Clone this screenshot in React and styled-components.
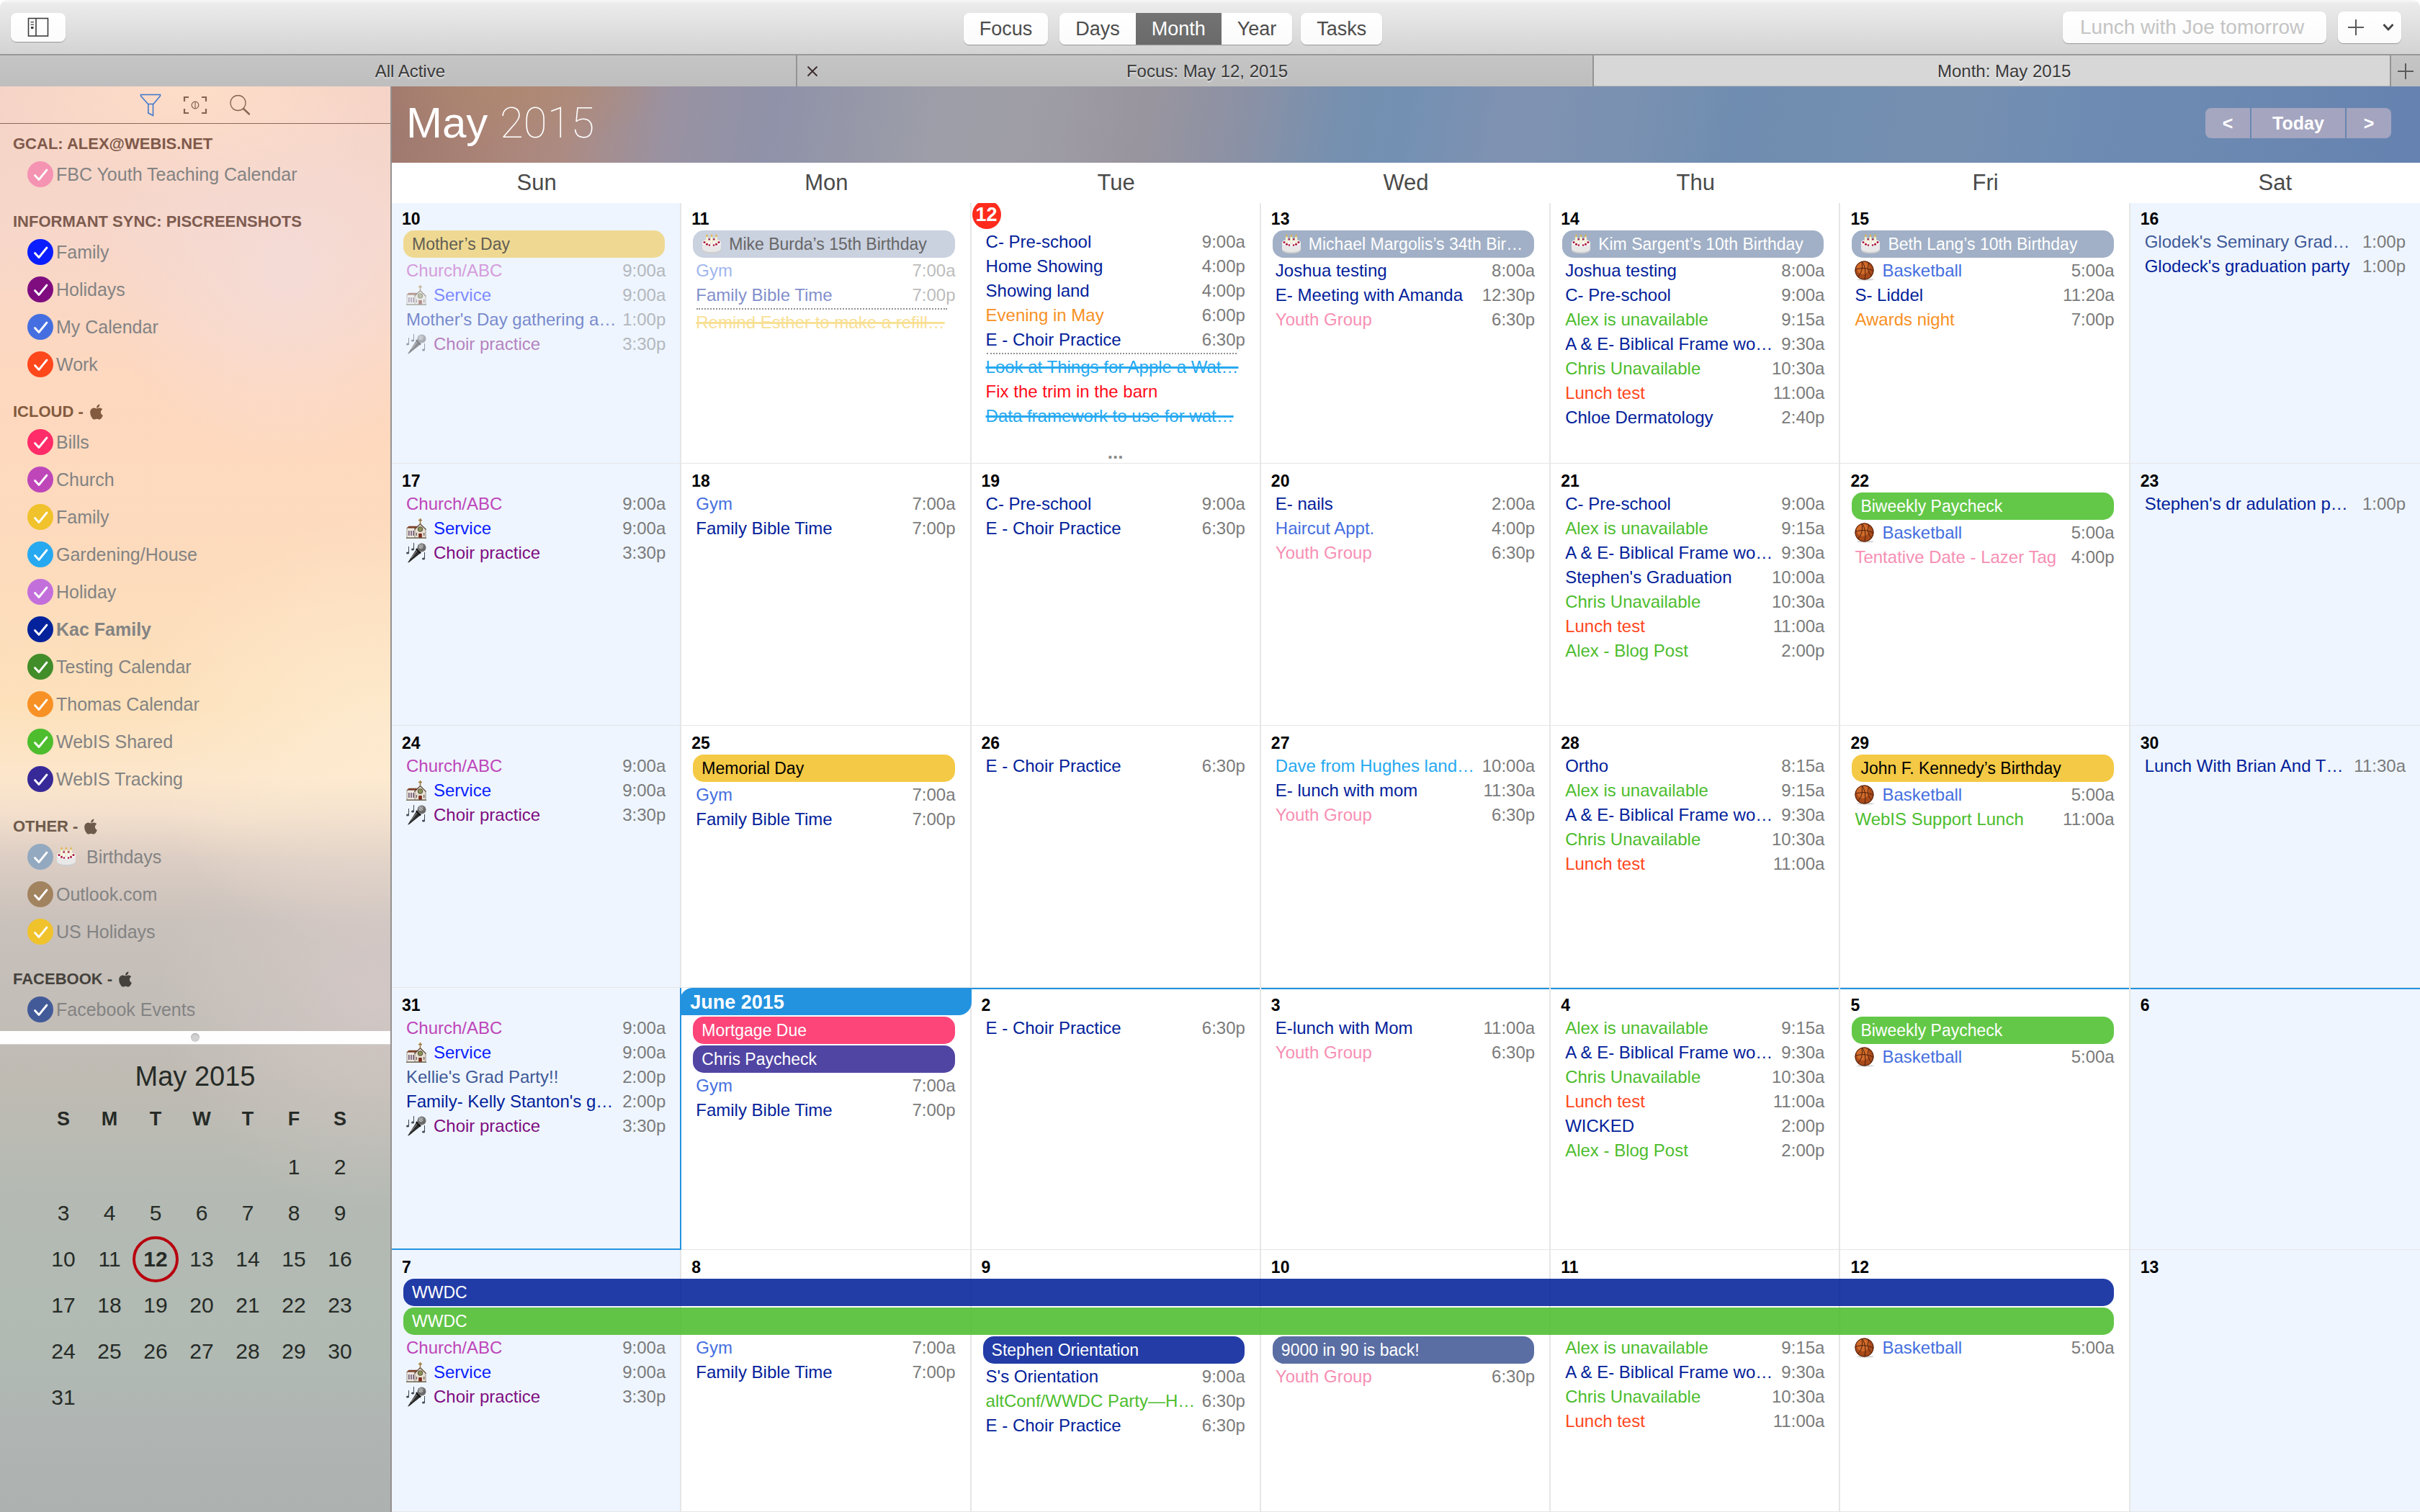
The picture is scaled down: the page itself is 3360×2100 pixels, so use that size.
import React, { useState } from "react";
import styled, { createGlobalStyle, css } from "styled-components";
import { FaApple } from "react-icons/fa";

const sans = `"Liberation Sans", Arial, Helvetica, sans-serif`;

const c = {
  navy: "#02219a",
  blue: "#0a1eff",
  royal: "#456fe0",
  church: "#be46b9",
  purple: "#7f0d80",
  orange: "#f79125",
  green: "#4dbd2e",
  pink: "#f78fb3",
  tomato: "#ff471c",
  sky: "#26a9f0",
  red: "#ff0d1a",
  gold: "#f2c22c",
  slate: "#3f5997",
  accent: "#2393e0",
  line: "#e6e6e6",
  weekend: "#eef5ff",
};

const GlobalStyle = createGlobalStyle`
  *, *::before, *::after { box-sizing: border-box; }
  body { margin: 0; background: #fff; font-family: ${sans}; }
  button, input { font-family: inherit; }
  ul { list-style: none; margin: 0; padding: 0; }
`;

const Window = styled.div`
  display: flex;
  flex-direction: column;
  min-height: 100vh;
  overflow: hidden;
`;

/* ---------- toolbar ---------- */

const Toolbar = styled.header`
  display: grid;
  grid-template-columns: 1fr auto 1fr;
  align-items: center;
  height: 77px;
  padding: 0 26px 0 15px;
  border-bottom: 2px solid #989898;
  border-radius: 10px 10px 0 0;
  background: linear-gradient(#f8f8f8, #ebebeb 5px, #d3d3d3);
`;

const raised = css`
  border: 0;
  border-radius: 8px;
  background: linear-gradient(#fff, #fbfbfb);
  box-shadow: 0 1px 1px rgba(0, 0, 0, 0.3);
`;

const ToggleButton = styled.button`
  ${raised}
  display: flex;
  align-items: center;
  justify-content: center;
  width: 76px;
  height: 40px;
  padding: 0;
`;

const ViewSwitch = styled.nav`
  display: flex;
  margin-top: 5px;
  padding-right: 92px;
`;

const Segments = styled.div`
  ${raised}
  display: flex;
  margin: 0 12px 0 16px;
`;

const ViewButton = styled.button`
  ${(p) => (p.$plain ? "border: 0; background: none;" : raised)}
  height: 44px;
  padding: 0 22px;
  font-size: 27px;
  line-height: 44px;
  color: #4d4d4d;
  ${(p) =>
    p.$on &&
    css`
      background: linear-gradient(#737373, #6a6a6a);
      color: #fff;
    `}
`;

const QuickAdd = styled.div`
  display: flex;
  justify-content: flex-end;
  gap: 16px;
`;

const QuickInput = styled.input`
  ${raised}
  width: 366px;
  height: 44px;
  padding: 0 24px;
  font-size: 28px;
  &::placeholder {
    color: #c4c4c4;
    opacity: 1;
  }
`;

const AddButton = styled.button`
  ${raised}
  display: flex;
  align-items: center;
  justify-content: space-between;
  width: 88px;
  height: 44px;
  padding: 0 10px 0 13px;
`;

/* ---------- tabs ---------- */

const TabBar = styled.nav`
  display: flex;
  height: 43px;
  background: linear-gradient(#c5c5c5, #bebebe);
`;

const Tab = styled.div`
  display: flex;
  flex: 1;
  align-items: center;
  border-right: 2px solid #949494;
  background: ${(p) => (p.$active ? "#d7d7d7" : "none")};
  box-shadow: ${(p) => (p.$active ? "inset 0 -1px #b9b9b9" : "none")};
`;

const TabClose = styled.button`
  display: flex;
  align-items: center;
  justify-content: center;
  width: 34px;
  height: 42px;
  padding: 0 0 0 8px;
  border: 0;
  background: none;
`;

const TabLabel = styled.button`
  flex: 1;
  padding: 0;
  border: 0;
  background: none;
  font-size: 24px;
  line-height: 42px;
  color: #3a3a3a;
  text-shadow: 0 2px 2px rgba(255, 255, 255, 0.6);
`;

const NewTab = styled.button`
  display: flex;
  align-items: center;
  justify-content: center;
  width: 40px;
  padding: 0;
  border: 0;
  background: none;
`;

/* ---------- sidebar ---------- */

const Body = styled.div`
  display: flex;
  flex: 1;
`;

const Sidebar = styled.aside`
  display: flex;
  flex-direction: column;
  flex: none;
  width: 544px;
  border-right: 2px solid #959190;
  background:
    radial-gradient(ellipse 300px 160px at 270px 0, rgba(255, 222, 200, 0.9), transparent),
    radial-gradient(ellipse 260px 260px at 400px 260px, rgba(243, 220, 218, 0.8), transparent),
    radial-gradient(ellipse 300px 300px at 520px 1260px, rgba(216, 203, 202, 0.7), transparent),
    radial-gradient(ellipse 320px 300px at 520px 900px, rgba(253, 236, 210, 0.8), transparent),
    linear-gradient(
      #f4d3c7 0, #f7d7ca 200px, #fed8bf 400px, #fddabd 620px, #fde1bb 860px,
      #fce6cb 960px, #f3dfcc 1010px, #ddcec4 1070px, #c9c1bb 1160px, #c2bdb7 1300px,
      #bfbbb3 1380px, #b4bab3 1540px, #b0bab3 1760px, #b0b5b3 1860px, #adb1b0 1980px
    );
`;

const SidebarTools = styled.div`
  display: flex;
  align-items: center;
  justify-content: center;
  gap: 26px;
  height: 52px;
  border-bottom: 1px solid #8c6857;
`;

const ToolButton = styled.button`
  display: flex;
  align-items: center;
  justify-content: center;
  width: 36px;
  height: 36px;
  padding: 0;
  border: 0;
  background: none;
`;

const Groups = styled.div`
  display: flex;
  flex-direction: column;
  gap: 24px;
  padding: 12px 18px 4px;
`;

const GroupTitle = styled.h2`
  display: flex;
  align-items: center;
  gap: 6px;
  margin: 0;
  font-size: 22px;
  line-height: 32px;
  color: ${(p) => p.$color};
`;

const CalendarRow = styled.label`
  display: flex;
  align-items: center;
  gap: 4px;
  height: 52px;
  padding-left: 20px;
  font-size: 25px;
  font-weight: ${(p) => (p.$bold ? 700 : 400)};
  color: #838383;
`;

const Tick = styled.span`
  display: grid;
  width: 36px;
  height: 36px;
  & > * {
    grid-area: 1 / 1;
  }
`;

const TickBox = styled.input`
  appearance: none;
  width: 36px;
  height: 36px;
  margin: 0;
  border-radius: 50%;
  background: ${(p) => p.$color};
`;

const Splitter = styled.div`
  display: flex;
  align-items: center;
  justify-content: center;
  height: 19px;
  border-bottom: 1px solid #d5d3d0;
  background: #fefefe;
  &::after {
    content: "";
    width: 12px;
    height: 12px;
    border-radius: 50%;
    background: #d0d0d0;
    box-shadow: inset 0 1px 1px #a4a4a4;
  }
`;

const MiniMonth = styled.section`
  display: flex;
  flex-direction: column;
  align-items: center;
  padding-top: 20px;
  padding-left: 18px;
  color: #262b27;
`;

const MiniTitle = styled.h2`
  margin: 0 18px 0 0;
  font-size: 38px;
  font-weight: 400;
  line-height: 48px;
`;

const MiniTable = styled.table`
  border-collapse: collapse;
  table-layout: fixed;
  width: 448px;
  font-size: 30px;
  text-align: center;
  th {
    height: 70px;
    padding: 0;
    font-size: 27px;
  }
  td {
    height: 64px;
    padding: 0;
  }
`;

const MiniDay = styled.button`
  width: 64px;
  height: 64px;
  padding: 0;
  border: ${(p) => (p.$today ? "4px solid #b8040f" : "0")};
  border-radius: 50%;
  background: none;
  font-size: 30px;
  font-weight: ${(p) => (p.$today ? 700 : 400)};
  color: inherit;
  vertical-align: middle;
`;

/* ---------- month view ---------- */

const Month = styled.main`
  display: flex;
  flex: 1;
  flex-direction: column;
  min-width: 0;
`;

const MonthBar = styled.div`
  display: flex;
  align-items: center;
  justify-content: space-between;
  height: 106px;
  padding: 0 40px 4px 20px;
  background:
    radial-gradient(ellipse 220px 90px at 160px 0, rgba(178, 138, 108, 0.6), transparent),
    linear-gradient(
      100deg,
      #9e786e 0, #aa8377 5%, #ac8b83 9%, #9992a2 14%, #8f92a9 19%, #9d9ea8 27%,
      #9f9ea7 31%, #99959e 37%, #8b91a5 42%, #7590b0 47%, #7390b3 50%, #8092b2 55%,
      #7a91b1 61%, #6f8db0 66%, #758fb0 77%, #6e8cb3 83%, #6b89b1 90%, #6582b0 100%
    );
`;

const MonthTitle = styled.h1`
  margin: 0;
  font-size: 60px;
  font-weight: 400;
  line-height: 72px;
  color: #fff;
`;

const ThinYear = styled.span`
  font-family: Roboto, ${sans};
  font-weight: 100;
`;

const Pager = styled.div`
  display: flex;
  gap: 2px;
  overflow: hidden;
  border-radius: 8px;
`;

const PagerButton = styled.button`
  width: ${(p) => (p.$wide ? 130 : 62)}px;
  height: 42px;
  padding: 0;
  border: 0;
  background: rgba(196, 182, 200, 0.65);
  font-size: 25px;
  font-weight: 700;
  line-height: 42px;
  color: #fff;
`;

const Weekdays = styled.div`
  display: grid;
  grid-template-columns: repeat(7, 1fr);
  z-index: 1;
  height: 56px;
  margin-bottom: -2px;
  background: #fff;
  font-size: 31px;
  line-height: 56px;
  text-align: center;
  color: #4a4a4a;
`;

const Week = styled.div`
  display: grid;
  grid-template-columns: repeat(7, minmax(0, 1fr));
  flex: 1 0 0;
`;

const Day = styled.section`
  grid-row: 1;
  grid-column: ${(p) => p.$col};
  display: flex;
  flex-direction: column;
  border-right: 2px solid ${c.line};
  border-bottom: 1px solid ${c.line};
  background: ${(p) => (p.$weekend ? c.weekend : "#fff")};
  ${(p) => p.$col === 7 && "border-right: 0;"}
  ${(p) => p.$topEdge && `box-shadow: inset 0 2px ${c.accent};`}
  ${(p) =>
    p.$lastOfMonth &&
    css`
      border-right-color: ${c.accent};
      border-bottom: 2px solid ${c.accent};
    `}
`;

const DayNumber = styled.h3`
  height: 38px;
  margin: 0;
  padding: 9px 14px 0;
  font-size: 23px;
  line-height: 30px;
  color: #000;
`;

const TodayBadge = styled.h3`
  width: 40px;
  height: 40px;
  margin: -2px 0 0 1px;
  border-radius: 50%;
  background: #ff2b1c;
  font-size: 27px;
  line-height: 40px;
  text-align: center;
  color: #fff;
`;

const MonthBadge = styled.h3`
  z-index: 1;
  height: 38px;
  margin: 0 -2px;
  padding-left: 14px;
  border-radius: 18px 0;
  background: ${c.accent};
  font-size: 27px;
  line-height: 40px;
  color: #fff;
`;

const Chip = styled.div`
  display: flex;
  align-items: center;
  height: 38px;
  margin: ${(p) => (p.$span ? "2px 0 0" : "2px 21px 0 16px")};
  padding: 0 12px;
  overflow: hidden;
  border-radius: 15px;
  background: ${(p) => p.$bg};
  font-size: 23px;
  line-height: 38px;
  white-space: nowrap;
  color: ${(p) => p.$fg};
`;

const Spans = styled.div`
  grid-row: 1;
  grid-column: 1 / 7;
  z-index: 1;
  align-self: start;
  margin: 38px 23px 0 16px;
`;

const SpanRoom = styled.div`
  height: 80px;
`;

const EventList = styled.ul`
  padding: 1px 20px 0 20px;
  font-size: 24px;
  line-height: 34px;
  white-space: nowrap;
`;

const EventItem = styled.li`
  display: flex;
  justify-content: space-between;
  height: 34px;
  opacity: ${(p) => (p.$faded ? 0.5 : 1)};
`;

const EventTitle = styled.span`
  display: flex;
  align-items: center;
  color: ${(p) => p.$color};
  text-decoration: ${(p) => (p.$done ? "line-through 3px" : "none")};
`;

const EventTime = styled.time`
  color: #7b7b7b;
`;

const TaskRule = styled.li`
  height: 2px;
  margin: 1px 12px 1px 1px;
  border-bottom: 2px dotted #909090;
`;

const MoreButton = styled.button`
  align-self: center;
  height: 30px;
  margin-top: auto;
  padding: 0;
  border: 0;
  background: none;
  font-size: 26px;
  font-weight: 700;
  line-height: 28px;
  color: #8c8c8c;
`;

const Glyph = styled.svg`
  flex: none;
  width: 28px;
  height: 28px;
  margin-right: 10px;
`;

/* ---------- drawings ---------- */

const Cake = () => (
  <Glyph viewBox="0 0 28 28" aria-hidden="true">
    <path d="M1 12v10c0 3 6 5 13 5s13-2 13-5V12z" fill="#cfcece" />
    <path d="M1 13v7c0 3 6 5 13 5s13-2 13-5v-7z" fill="#e9e8e8" />
    <ellipse cx="14" cy="12" rx="13" ry="5" fill="#fbfafa" />
    <g fill="#a8123c">
      <circle cx="4" cy="11.500" r="1.500" /><circle cx="7.500" cy="14.200" r="1.500" />
      <circle cx="11" cy="15.500" r="1.300" /><circle cx="17" cy="15.500" r="1.300" />
      <circle cx="20.500" cy="14.200" r="1.500" /><circle cx="24" cy="11.500" r="1.500" />
      <circle cx="10.700" cy="7.500" r="1.300" /><circle cx="17.300" cy="7.500" r="1.300" />
    </g>
    <g fill="#fbf8df" stroke="#cfc7a4" strokeWidth=".5">
      <rect x="6" y="4" width="3" height="8.500" /><rect x="12.500" y="4" width="3" height="9.500" />
      <rect x="19" y="4" width="3" height="8.500" />
    </g>
    <g fill="#e4b43c">
      <path d="M7.500 0l1.300 2.500-1.300 1.700-1.300-1.700z" />
      <path d="M14 0l1.300 2.500-1.300 1.700-1.300-1.700z" />
      <path d="M20.500 0l1.300 2.500-1.300 1.700-1.300-1.700z" />
    </g>
  </Glyph>
);

const Church = () => (
  <Glyph viewBox="0 0 28 28" aria-hidden="true">
    <path d="M1 13h13v14H1z" fill="#eee9e2" stroke="#7c7265" strokeWidth=".7" />
    <path d="M.5 13.500l3-2.700h12v2.700z" fill="#7d4026" />
    <path d="M12 27V15l7.500-7L27 15v12z" fill="#e6dfd2" stroke="#766c5e" strokeWidth=".7" />
    <path d="M11.300 15.500L19.500 7.500l8 8" fill="none" stroke="#5d4433" strokeWidth="1.200" />
    <path d="M19.500 0v7.500M17 2.500h5" stroke="#9c7434" strokeWidth="1.500" />
    <circle cx="19.500" cy="15" r="3.300" fill="#8d9258" stroke="#4d4a30" strokeWidth="1" />
    <path d="M17.200 27v-6h4.600v6z" fill="#7a2a1c" />
    <path d="M3 17h1.600v7H3zM6.200 17h1.600v7H6.200zM9.400 17H11v7H9.400z" fill="#6d5570" />
    <path d="M13.700 20h1.300v4h-1.300zM24 20h1.300v4H24z" fill="#6f5d58" />
    <path d="M0 26.500h28V28H0z" fill="#77705f" />
  </Glyph>
);

const Mic = () => (
  <Glyph viewBox="0 0 28 28" aria-hidden="true">
    <path d="M2 27.500L14 9l5.500 5.500L4 27z" fill="#2c2c2c" />
    <path d="M7 21l8-10" stroke="#8e8e8e" strokeWidth="1.200" />
    <path d="M14 8l6 6.500" stroke="#111" strokeWidth="2.500" />
    <circle cx="21.500" cy="6.500" r="6" fill="#6e6e6e" />
    <circle cx="20.500" cy="5" r="3.200" fill="#b4b4b4" />
    <path d="M17.500 3l8 8M19.500 1.500l7 7M16 6l6 6" stroke="#505050" strokeWidth=".6" />
    <g fill="none" stroke="#3f4750" strokeWidth="1">
      <path d="M3.500 5v9M10.500 0v9M25.500 13v9" />
    </g>
    <g fill="#3f4750">
      <ellipse cx="2" cy="14" rx="2" ry="1.500" /><ellipse cx="9" cy="9" rx="2" ry="1.500" />
      <ellipse cx="24" cy="22" rx="2" ry="1.500" />
    </g>
  </Glyph>
);

const Basketball = () => (
  <Glyph viewBox="0 0 28 28" aria-hidden="true">
    <ellipse cx="15" cy="26.300" rx="12" ry="1.500" fill="#d4d4d4" />
    <circle cx="13.500" cy="13.500" r="13" fill="#a94a1a" />
    <circle cx="11.500" cy="10" r="9" fill="#d06a2a" />
    <g fill="none" stroke="#4a1e0a" strokeWidth="1">
      <circle cx="13.500" cy="13.500" r="12.600" />
      <path d="M10.500 1.200c4 6 5.500 16 3.500 24.800M1 12.500c8-3 18-2.500 25 2M4.500 22.500c5-5 7-11.500 5.500-21M23.500 21c-5-4-6.500-12-3.500-18" />
    </g>
  </Glyph>
);

const glyphs = { cake: <Cake />, church: <Church />, mic: <Mic />, ball: <Basketball /> };

const CheckMark = () => (
  <svg width="36" height="36" viewBox="0 0 36 36" pointerEvents="none" aria-hidden="true">
    <path d="M10.500 19.500l5.500 6L27 12" fill="none" stroke="#fff" strokeWidth="2.800" strokeLinecap="round" strokeLinejoin="round" />
  </svg>
);

const PanelIcon = () => (
  <svg width="30" height="28" viewBox="0 0 30 28" aria-hidden="true">
    <g fill="none" stroke="#3d3d3d" strokeWidth="1.600">
      <rect x="1.500" y="1.500" width="27" height="24.500" /><path d="M12 1.500V26" />
    </g>
    <path d="M4.500 6h4.500v1.300H4.500zM4.500 9.500h4.500v1.300H4.500zM5 13h3.500v3H5z" fill="#3d3d3d" />
  </svg>
);

const Funnel = () => (
  <svg width="30" height="32" viewBox="0 0 30 32" fill="none" stroke="#3a76cc" strokeWidth="1.500" aria-hidden="true">
    <path d="M1.500 1.500h27v1.800L19 14.500h-7.500L1.500 3.300zM11.800 14.500v12.500l6.700 3.500v-16" />
  </svg>
);

const Viewfinder = () => (
  <svg width="34" height="26" viewBox="0 0 34 26" fill="none" stroke="#866353" aria-hidden="true">
    <path d="M2 8V2h6M26 2h6v6M32 18v6h-6M8 24H2v-6" strokeWidth="2.200" />
    <circle cx="17" cy="13" r="4.800" strokeWidth="1.300" /><path d="M17 8v10" strokeWidth="1.200" />
  </svg>
);

const Magnifier = () => (
  <svg width="30" height="30" viewBox="0 0 30 30" fill="none" stroke="#8a6553" strokeLinecap="round" aria-hidden="true">
    <circle cx="12.500" cy="12" r="10.500" strokeWidth="1.300" /><path d="M20 20l8 7.500" strokeWidth="2.400" />
  </svg>
);

const Plus = () => (
  <svg width="24" height="24" viewBox="0 0 24 24" stroke="#5a5a5a" strokeWidth="2" aria-hidden="true">
    <path d="M12 1v22M1 12h22" />
  </svg>
);

const Caret = () => (
  <svg width="16" height="12" viewBox="0 0 16 12" fill="none" stroke="#444" strokeWidth="2.800" aria-hidden="true">
    <path d="M1.500 2L8 9l6.500-7" />
  </svg>
);

const Cross = () => (
  <svg width="16" height="16" viewBox="0 0 16 16" stroke="#3a2a2a" strokeWidth="1.800" aria-hidden="true">
    <path d="M1.500 1.500l13 13M14.500 1.500l-13 13" />
  </svg>
);

/* ---------- data ---------- */

const groups = [
  { title: "GCAL: ALEX@WEBIS.NET", color: "#80594a", items: [["FBC Youth Teaching Calendar", "#f593b3"]] },
  {
    title: "INFORMANT SYNC: PISCREENSHOTS",
    color: "#7d5b4f",
    items: [["Family", "#0b1eff"], ["Holidays", "#7f0d80"], ["My Calendar", "#456fe0"], ["Work", "#ff471c"]],
  },
  {
    title: "ICLOUD -",
    apple: true,
    color: "#835b3f",
    items: [
      ["Bills", "#ff2c69"], ["Church", "#be46b9"], ["Family", "#f0c22c"], ["Gardening/House", "#26a9f0"],
      ["Holiday", "#c36fdb"], ["Kac Family", "#04229b", "bold"], ["Testing Calendar", "#418d2a"],
      ["Thomas Calendar", "#f79125"], ["WebIS Shared", "#4dbd2e"], ["WebIS Tracking", "#382998"],
    ],
  },
  {
    title: "OTHER -",
    apple: true,
    color: "#6e5a4a",
    items: [["Birthdays", "#93a9bf", "cake"], ["Outlook.com", "#a28360"], ["US Holidays", "#f0c22c"]],
  },
  { title: "FACEBOOK -", apple: true, color: "#45423d", items: [["Facebook Events", "#425a98"]] },
];

const e = (title, time, color, icon) => ({ title, time, color, icon });
const chip = (title, bg, fg = "#fff", icon) => ({ title, bg, fg, icon });

const churchAbc = e("Church/ABC", "9:00a", c.church);
const service = e("Service", "9:00a", c.blue, "church");
const choir = e("Choir practice", "3:30p", c.purple, "mic");
const gym = e("Gym", "7:00a", c.royal);
const bible = e("Family Bible Time", "7:00p", c.navy);
const preschool = e("C- Pre-school", "9:00a", c.navy);
const choirPractice = e("E - Choir Practice", "6:30p", c.navy);
const youth = e("Youth Group", "6:30p", c.pink);
const alex = e("Alex is unavailable", "9:15a", c.green);
const frame = e("A & E- Biblical Frame wo…", "9:30a", c.navy);
const chris = e("Chris Unavailable", "10:30a", c.green);
const lunch = e("Lunch test", "11:00a", c.tomato);
const blog = e("Alex - Blog Post", "2:00p", c.green);
const ball = e("Basketball", "5:00a", c.royal, "ball");
const paycheck = chip("Biweekly Paycheck", "#63c847");

const weeks = [
  {
    days: [
      {
        n: 10, faded: true, chips: [chip("Mother’s Day", "#efd992", "#625e54")],
        events: [churchAbc, service, e("Mother's Day gathering a…", "1:00p", c.navy), choir],
      },
      {
        n: 11, faded: true, chips: [chip("Mike Burda’s 15th Birthday", "#cad1df", "#666", "cake")],
        events: [gym, bible], tasks: [{ title: "Remind Esther to make a refill…", color: c.gold, done: true }],
      },
      {
        n: 12, today: true, more: true,
        events: [
          preschool, e("Home Showing", "4:00p", c.navy), e("Showing land", "4:00p", c.navy),
          e("Evening in May", "6:00p", c.orange), choirPractice,
        ],
        tasks: [
          { title: "Look at Things for Apple a Wat…", color: c.sky, done: true },
          { title: "Fix the trim in the barn", color: c.red },
          { title: "Data framework to use for wat…", color: c.sky, done: true },
        ],
      },
      {
        n: 13, chips: [chip("Michael Margolis’s 34th Bir…", "#a1b0c6", "#fff", "cake")],
        events: [e("Joshua testing", "8:00a", c.navy), e("E- Meeting with Amanda", "12:30p", c.navy), youth],
      },
      {
        n: 14, chips: [chip("Kim Sargent’s 10th Birthday", "#a1b0c6", "#fff", "cake")],
        events: [
          e("Joshua testing", "8:00a", c.navy), preschool, alex, frame, chris, lunch,
          e("Chloe Dermatology", "2:40p", c.navy),
        ],
      },
      {
        n: 15, chips: [chip("Beth Lang’s 10th Birthday", "#a1b0c6", "#fff", "cake")],
        events: [ball, e("S- Liddel", "11:20a", c.navy), e("Awards night", "7:00p", c.orange)],
      },
      {
        n: 16,
        events: [e("Glodek's Seminary Grad…", "1:00p", c.slate), e("Glodeck's graduation party", "1:00p", c.navy)],
      },
    ],
  },
  {
    days: [
      { n: 17, events: [churchAbc, service, choir] },
      { n: 18, events: [gym, bible] },
      { n: 19, events: [preschool, choirPractice] },
      { n: 20, events: [e("E- nails", "2:00a", c.navy), e("Haircut Appt.", "4:00p", c.royal), youth] },
      {
        n: 21,
        events: [preschool, alex, frame, e("Stephen's Graduation", "10:00a", c.navy), chris, lunch, blog],
      },
      { n: 22, chips: [paycheck], events: [ball, e("Tentative Date - Lazer Tag", "4:00p", c.pink)] },
      { n: 23, events: [e("Stephen's dr adulation p…", "1:00p", c.navy)] },
    ],
  },
  {
    days: [
      { n: 24, events: [churchAbc, service, choir] },
      { n: 25, chips: [chip("Memorial Day", "#f4c945", "#000")], events: [gym, bible] },
      { n: 26, events: [choirPractice] },
      {
        n: 27,
        events: [e("Dave from Hughes land…", "10:00a", c.sky), e("E- lunch with mom", "11:30a", c.navy), youth],
      },
      { n: 28, events: [e("Ortho", "8:15a", c.navy), alex, frame, chris, lunch] },
      {
        n: 29, chips: [chip("John F. Kennedy’s Birthday", "#f4c945", "#000")],
        events: [ball, e("WebIS Support Lunch", "11:00a", c.green)],
      },
      { n: 30, events: [e("Lunch With Brian And T…", "11:30a", c.navy)] },
    ],
  },
  {
    days: [
      {
        n: 31, lastOfMonth: true,
        events: [
          churchAbc, service, e("Kellie's Grad Party!!", "2:00p", c.slate),
          e("Family- Kelly Stanton's g…", "2:00p", c.navy), choir,
        ],
      },
      {
        n: 1, month: "June 2015", chips: [chip("Mortgage Due", "#fd4579"), chip("Chris Paycheck", "#5145a3")],
        events: [gym, bible],
      },
      { n: 2, topEdge: true, events: [choirPractice] },
      { n: 3, topEdge: true, events: [e("E-lunch with Mom", "11:00a", c.navy), youth] },
      { n: 4, topEdge: true, events: [alex, frame, chris, lunch, e("WICKED", "2:00p", c.navy), blog] },
      { n: 5, topEdge: true, chips: [paycheck], events: [ball] },
      { n: 6, topEdge: true, events: [] },
    ],
  },
  {
    spans: [chip("WWDC", "rgba(4, 34, 155, 0.88)"), chip("WWDC", "rgba(77, 189, 46, 0.88)")],
    days: [
      { n: 7, room: true, events: [churchAbc, service, choir] },
      { n: 8, room: true, events: [gym, bible] },
      {
        n: 9, room: true, chips: [chip("Stephen Orientation", "#233ca6")],
        events: [e("S's Orientation", "9:00a", c.navy), e("altConf/WWDC Party—H…", "6:30p", c.green), choirPractice],
      },
      { n: 10, room: true, chips: [chip("9000 in 90 is back!", "#5a6ea3")], events: [youth] },
      { n: 11, room: true, events: [alex, frame, chris, lunch] },
      { n: 12, room: true, events: [ball] },
      { n: 13, events: [] },
    ],
  },
];

const miniRows = [0, 1, 2, 3, 4, 5].map((row) => [0, 1, 2, 3, 4, 5, 6].map((col) => row * 7 + col - 4));

/* ---------- parts ---------- */

function DayCell({ day, col }) {
  const { chips = [], events, tasks } = day;
  return (
    <Day
      $col={col + 1}
      $weekend={col === 0 || col === 6}
      $topEdge={day.topEdge}
      $lastOfMonth={day.lastOfMonth}
    >
      {day.month ? (
        <MonthBadge>{day.month}</MonthBadge>
      ) : day.today ? (
        <TodayBadge>{day.n}</TodayBadge>
      ) : (
        <DayNumber>{day.n}</DayNumber>
      )}
      {day.room && <SpanRoom />}
      {chips.map((item) => (
        <Chip key={item.title} $bg={item.bg} $fg={item.fg}>
          {glyphs[item.icon]}
          {item.title}
        </Chip>
      ))}
      <EventList>
        {events.map((item) => (
          <EventItem key={item.title} $faded={day.faded}>
            <EventTitle $color={item.color}>
              {glyphs[item.icon]}
              {item.title}
            </EventTitle>
            <EventTime>{item.time}</EventTime>
          </EventItem>
        ))}
        {tasks && <TaskRule />}
        {tasks?.map((item) => (
          <EventItem key={item.title} $faded={day.faded}>
            <EventTitle $color={item.color} $done={item.done}>{item.title}</EventTitle>
          </EventItem>
        ))}
      </EventList>
      {day.more && <MoreButton>...</MoreButton>}
    </Day>
  );
}

function CalendarToggle({ name, color, mark }) {
  const [on, setOn] = useState(true);
  return (
    <li>
      <CalendarRow $bold={mark === "bold"}>
        <Tick>
          <TickBox type="checkbox" $color={color} checked={on} onChange={() => setOn(!on)} />
          {on && <CheckMark />}
        </Tick>
        {mark === "cake" && <Cake />}
        {name}
      </CalendarRow>
    </li>
  );
}

export default function App() {
  return (
    <Window>
      <GlobalStyle />
      <Toolbar>
        <ToggleButton aria-label="Toggle sidebar"><PanelIcon /></ToggleButton>
        <ViewSwitch>
          <ViewButton>Focus</ViewButton>
          <Segments>
            <ViewButton $plain>Days</ViewButton>
            <ViewButton $plain $on>Month</ViewButton>
            <ViewButton $plain>Year</ViewButton>
          </Segments>
          <ViewButton>Tasks</ViewButton>
        </ViewSwitch>
        <QuickAdd>
          <QuickInput aria-label="Quick add" placeholder="Lunch with Joe tomorrow" />
          <AddButton aria-label="Add"><Plus /><Caret /></AddButton>
        </QuickAdd>
      </Toolbar>

      <TabBar>
        <Tab><TabClose as="span" /><TabLabel>All Active</TabLabel></Tab>
        <Tab>
          <TabClose aria-label="Close tab"><Cross /></TabClose>
          <TabLabel>Focus: May 12, 2015</TabLabel>
        </Tab>
        <Tab $active><TabClose as="span" /><TabLabel>Month: May 2015</TabLabel></Tab>
        <NewTab aria-label="New tab"><Plus /></NewTab>
      </TabBar>

      <Body>
        <Sidebar>
          <SidebarTools>
            <ToolButton aria-label="Filter"><Funnel /></ToolButton>
            <ToolButton aria-label="Focus"><Viewfinder /></ToolButton>
            <ToolButton aria-label="Search"><Magnifier /></ToolButton>
          </SidebarTools>
          <Groups>
            {groups.map((group) => (
              <section key={group.title}>
                <GroupTitle $color={group.color}>
                  {group.title}
                  {group.apple && <FaApple size={24} />}
                </GroupTitle>
                <ul>
                  {group.items.map(([name, color, mark]) => (
                    <CalendarToggle key={name} name={name} color={color} mark={mark} />
                  ))}
                </ul>
              </section>
            ))}
          </Groups>
          <Splitter />
          <MiniMonth>
            <MiniTitle>May 2015</MiniTitle>
            <MiniTable>
              <thead>
                <tr>{["S", "M", "T", "W", "T", "F", "S"].map((d, i) => <th key={i}>{d}</th>)}</tr>
              </thead>
              <tbody>
                {miniRows.map((row, r) => (
                  <tr key={r}>
                    {row.map((n) => (
                      <td key={n}>{n > 0 && n < 32 && <MiniDay $today={n === 12}>{n}</MiniDay>}</td>
                    ))}
                  </tr>
                ))}
              </tbody>
            </MiniTable>
          </MiniMonth>
        </Sidebar>

        <Month>
          <MonthBar>
            <MonthTitle>May <ThinYear>2015</ThinYear></MonthTitle>
            <Pager>
              <PagerButton aria-label="Previous">&lt;</PagerButton>
              <PagerButton $wide>Today</PagerButton>
              <PagerButton aria-label="Next">&gt;</PagerButton>
            </Pager>
          </MonthBar>
          <Weekdays>
            {["Sun", "Mon", "Tue", "Wed", "Thu", "Fri", "Sat"].map((d) => <div key={d}>{d}</div>)}
          </Weekdays>
          {weeks.map((week, w) => (
            <Week key={w}>
              {week.days.map((day, i) => <DayCell key={i} day={day} col={i} />)}
              {week.spans && (
                <Spans>
                  {week.spans.map((item, i) => (
                    <Chip key={i} $span $bg={item.bg} $fg={item.fg}>{item.title}</Chip>
                  ))}
                </Spans>
              )}
            </Week>
          ))}
        </Month>
      </Body>
    </Window>
  );
}
